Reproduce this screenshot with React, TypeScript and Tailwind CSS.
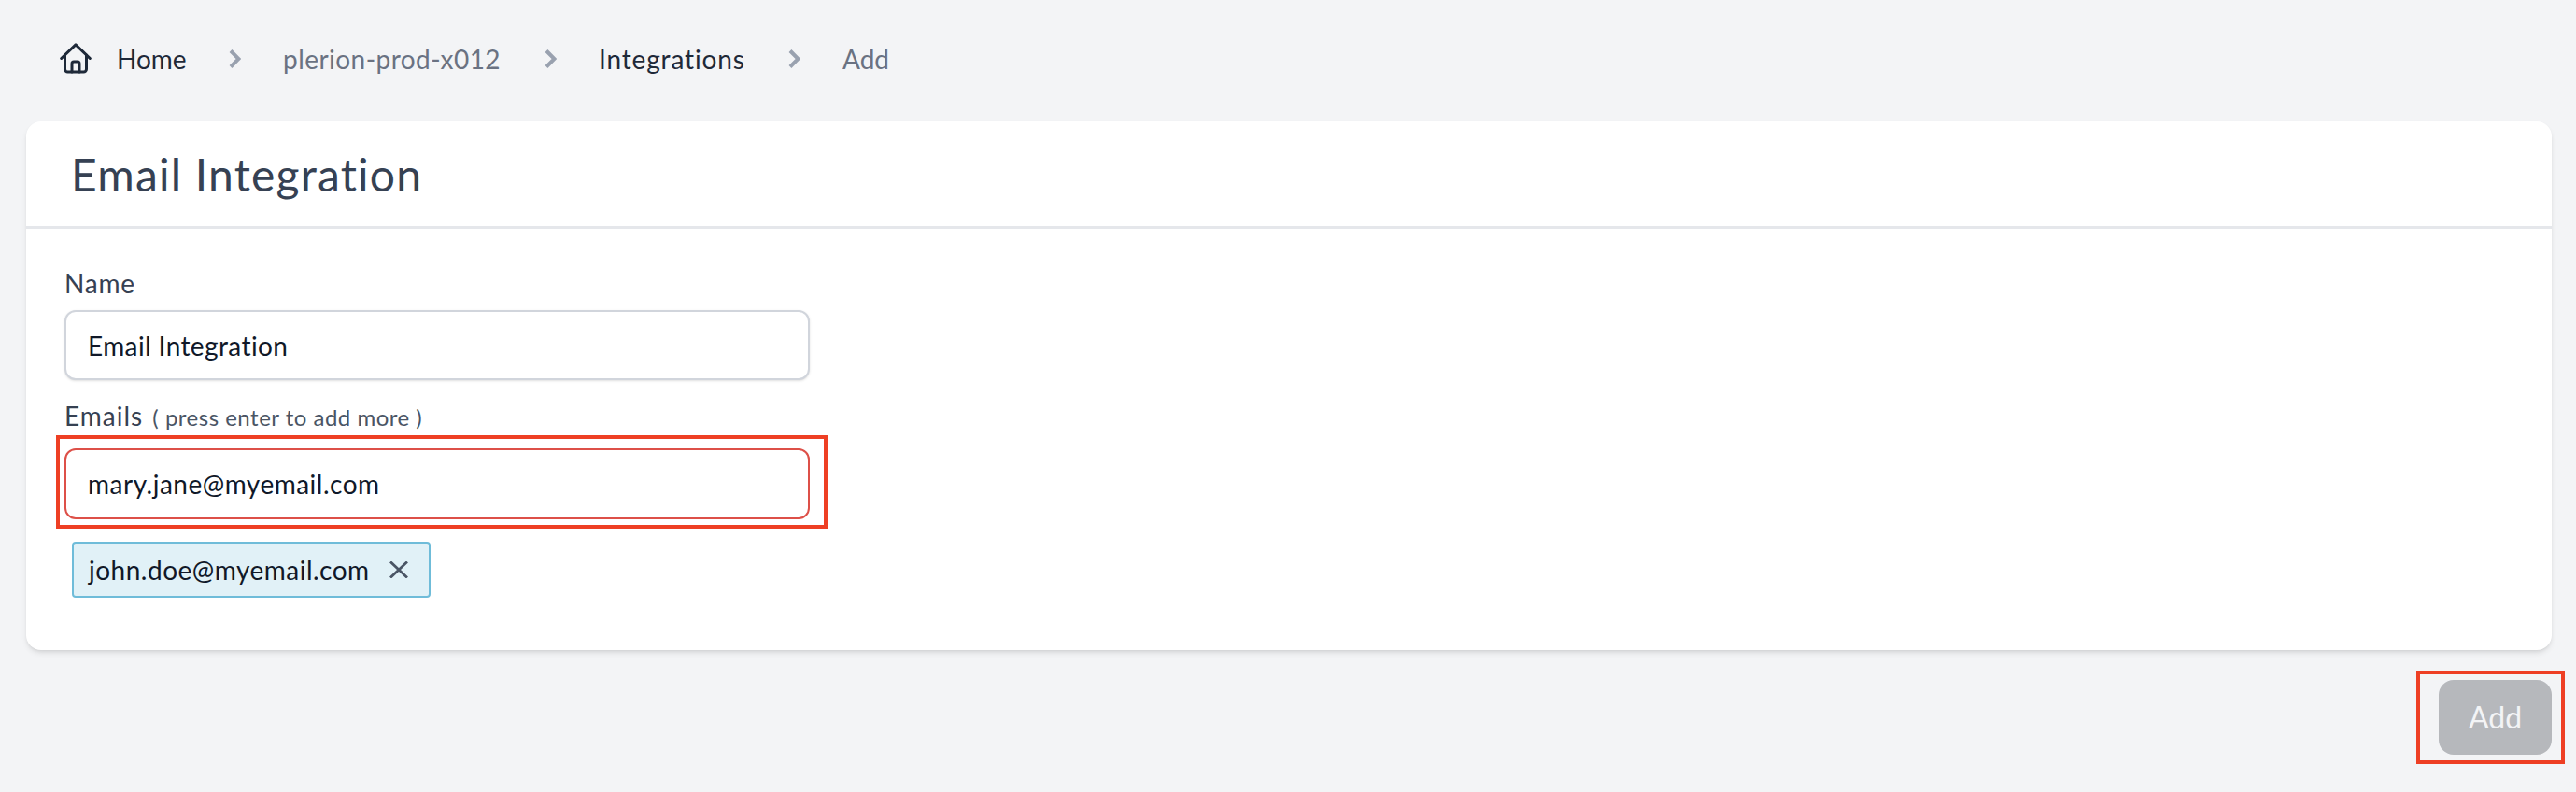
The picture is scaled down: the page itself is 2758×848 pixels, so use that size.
const font = "font-['Lato',sans-serif]";

function HomeIcon() {
  return (
    <svg viewBox="0 0 34 33" className="h-[33px] w-[34px] text-gray-800" fill="none" stroke="currentColor" strokeWidth="3" strokeLinejoin="round" strokeLinecap="round">
      <path d="M1.7 16.5 L17 1.8 L32.3 16.5" />
      <path d="M5.5 13 V28 a3 3 0 0 0 3 3 H25.5 a3 3 0 0 0 3 -3 V13" />
      <path d="M13 31 V22 a2 2 0 0 1 2 -2 H19 a2 2 0 0 1 2 2 V31" />
    </svg>
  );
}

function Chevron() {
  return (
    <svg viewBox="0 0 13 20" className="h-5 w-[13px] text-gray-400" fill="none" stroke="currentColor" strokeWidth="4">
      <path d="M2 1.5 L10.5 10 L2 18.5" />
    </svg>
  );
}

export default function App() {
  return (
    <div className={`${font} flex h-[848px] flex-col bg-gray-100 pl-[28px] pr-[26px]`}>
      {/* Breadcrumb */}
      <div className="flex h-[130px] items-center pb-[5px] text-[28px]">
        <div className="ml-[36px] flex items-center">
          <HomeIcon />
          <span className="ml-[27px] w-[73px] text-gray-800">Home</span>
        </div>
        <div className="ml-[47px]"><Chevron /></div>
        <span className="ml-[45px] w-[234px] tracking-[0.45px] text-gray-500">plerion-prod-x012</span>
        <div className="ml-[46px]"><Chevron /></div>
        <span className="ml-[45px] w-[157px] tracking-[0.85px] text-gray-800">Integrations</span>
        <div className="ml-[46px]"><Chevron /></div>
        <span className="ml-[45px] text-gray-500">Add</span>
      </div>

      {/* Card */}
      <div className="h-[566px] rounded-2xl bg-white shadow-md">
        <div className="flex h-[115px] items-center border-b-[3px] border-gray-200 pl-[48px] pt-[2px]">
          <h1 className="text-[48px] tracking-[1.2px] text-gray-700">Email Integration</h1>
        </div>
        <div className="px-[41px] pt-[42px]">
          <label className="block text-[28px] leading-[32px] tracking-[0.8px] text-gray-700">Name</label>
          <div className="mt-[13px] flex h-[75px] w-[798px] items-center rounded-xl border-2 border-gray-300 bg-white pl-[23px] text-[28px] tracking-[0.4px] text-gray-900 shadow-sm">
            Email Integration
          </div>
          <div className="mt-[22px] text-[28px] leading-[32px] tracking-[1px] text-gray-700">
            Emails <span className="ml-[2px] text-[24px] tracking-[0.5px] text-gray-600">( press enter to add more )</span>
          </div>
          <div className="relative mt-[17px] flex h-[76px] w-[798px] items-center rounded-xl border-[2.5px] border-[#dd5048] bg-white pl-[23px] text-[28px] tracking-[0.5px] text-gray-900">
            mary.jane@myemail.com
            <div className="absolute -top-[16.5px] -right-[20.5px] -bottom-[11.5px] -left-[11.5px] border-4 border-[#ee3f24]" />
          </div>
          <div className="ml-[8px] mt-[24px] inline-flex h-[60px] w-[384px] items-center justify-between rounded border-2 border-[#6fbcd9] bg-[#e1f1f7] pl-[16px] pr-[22px] text-[28px] tracking-[0.5px] text-gray-900">
            john.doe@myemail.com
            <svg viewBox="0 0 20 18" className="h-[18px] w-[20px] text-gray-600" fill="none" stroke="currentColor" strokeWidth="2.8">
              <path d="M1 0.5 L19 17.5 M19 0.5 L1 17.5" />
            </svg>
          </div>
        </div>
      </div>

      {/* Footer */}
      <div className="mt-[32px] flex justify-end">
        <div className="relative">
          <button className="h-[80px] w-[121px] rounded-2xl bg-[#b6b8bc] text-[32px] text-gray-100">Add</button>
          <div className="absolute -top-[10px] -right-[14px] -bottom-[10px] -left-[24px] border-4 border-[#ee3f24]" />
        </div>
      </div>
    </div>
  );
}
